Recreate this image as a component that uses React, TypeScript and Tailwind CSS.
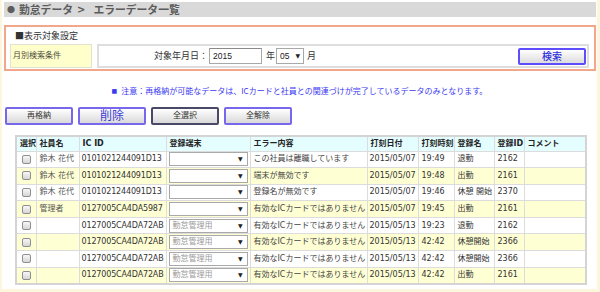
import React from "react";

type Row = {
  name: string;
  ic: string;
  term: string;
  err: string;
  date: string;
  time: string;
  reg: string;
  id: string;
};

const rows: Row[] = [
  { name: "鈴木 花代", ic: "0101021244091D13", term: "", err: "この社員は離職しています", date: "2015/05/07", time: "19:49", reg: "退勤", id: "2162" },
  { name: "鈴木 花代", ic: "0101021244091D13", term: "", err: "端末が無効です", date: "2015/05/07", time: "19:48", reg: "出勤", id: "2161" },
  { name: "鈴木 花代", ic: "0101021244091D13", term: "", err: "登録名が無効です", date: "2015/05/07", time: "19:46", reg: "休憩 開始", id: "2370" },
  { name: "管理者", ic: "0127005CA4DA5987", term: "", err: "有効なICカードではありません", date: "2015/05/07", time: "19:45", reg: "出勤", id: "2161" },
  { name: "", ic: "0127005CA4DA72AB", term: "勤怠管理用", err: "有効なICカードではありません", date: "2015/05/13", time: "19:23", reg: "退勤", id: "2162" },
  { name: "", ic: "0127005CA4DA72AB", term: "勤怠管理用", err: "有効なICカードではありません", date: "2015/05/13", time: "42:42", reg: "休憩開始", id: "2366" },
  { name: "", ic: "0127005CA4DA72AB", term: "勤怠管理用", err: "有効なICカードではありません", date: "2015/05/13", time: "42:42", reg: "休憩開始", id: "2366" },
  { name: "", ic: "0127005CA4DA72AB", term: "勤怠管理用", err: "有効なICカードではありません", date: "2015/05/13", time: "42:42", reg: "出勤", id: "2161" },
];

const headers = ["選択", "社員名", "IC ID", "登録端末", "エラー内容", "打刻日付", "打刻時刻", "登録名", "登録ID", "コメント"];
const widths = [20, 43, 87, 84, 117, 51, 36, 40, 30, 62];

function Checkbox() {
  return (
    <div className="mx-auto w-[9px] h-[9px] rounded-[2px] border border-[#8f8f8f] bg-linear-to-b from-[#f7f7f7] to-[#d6d6d6]" />
  );
}

function RowSelect({ text }: { text: string }) {
  return (
    <div className="mx-[2px] h-[14px] bg-white border border-[#a9a9a9] flex items-center justify-between pl-[3px] pr-[4px]">
      <span className="text-[8px] text-[#9a9a9a] leading-none">{text}</span>
      <span className="text-[6px] text-[#222] leading-none">▼</span>
    </div>
  );
}

function Btn({ label, big, dark }: { label: string; big?: boolean; dark?: boolean }) {
  return (
    <div
      className={
        "w-[68px] h-[18px] rounded-[2px] border-2 bg-linear-to-b from-white to-[#d9d9d9] flex items-center justify-center leading-none " +
        (dark ? "border-[#4a4868] " : "border-[#7767ea] ") +
        (big ? "text-[12px] text-[#3b3bd0]" : "text-[8px] text-[#333]")
      }
    >
      {label}
    </div>
  );
}

export default function App() {
  return (
    <div className="w-[600px] h-[292px] bg-[#fdf6dc] overflow-hidden font-['DejaVu_Sans','Noto_Sans_CJK_JP',sans-serif]">
      <div className="ml-[2px] w-[595px] h-[289px] bg-white flex flex-col">
        {/* title bar */}
        <div className="mt-[2px] ml-[2px] w-[592px] h-[15px] bg-[#d9d9d9] flex items-center font-['Noto_Sans_CJK_JP',sans-serif] font-bold text-[#5c5c5c] leading-none">
          <span className="ml-[3px] text-[8px] font-normal">●</span>
          <span className="ml-[4px] text-[10.8px]">勤怠データ</span>
          <span className="ml-[4px] text-[10px] font-['DejaVu_Sans',sans-serif]">&gt;</span>
          <span className="ml-[8px] text-[10.8px]">エラーデータ一覧</span>
        </div>

        {/* settings box */}
        <div className="mt-[8px] ml-[2px] w-[592px] h-[46px] border-2 border-[#f2a68c] flex flex-col">
          <div className="h-[17px] flex items-center pl-[9px]">
            <span className="text-[9px] text-[#333] leading-none font-['Noto_Sans_CJK_JP',sans-serif]">■表示対象設定</span>
          </div>
          <div className="h-[24px] flex pl-[4px] gap-[5px]">
            <div className="w-[82px] h-full bg-[#ffffcc] border border-[#e2e2cf] flex items-center pl-[2px]">
              <span className="text-[8px] text-[#4a4a3a] leading-none">月別検索条件</span>
            </div>
            <div className="w-[492px] h-full border-2 border-[#dedede] flex items-center">
              <span className="ml-[55px] text-[9px] text-[#333] leading-none">対象年月日：</span>
              <div className="ml-[1px] w-[53px] h-[16px] border border-[#a8a8a8] border-t-[#8a8a8a] flex items-center pl-[3px]">
                <span className="font-['Liberation_Sans',sans-serif] text-[8.5px] text-[#222] leading-none">2015</span>
              </div>
              <span className="ml-[4px] text-[9px] text-[#333] leading-none">年</span>
              <div className="ml-[1px] w-[28px] h-[16px] border border-[#a8a8a8] flex items-center justify-between pl-[3px] pr-[3px]">
                <span className="font-['Liberation_Sans',sans-serif] text-[8.5px] text-[#222] leading-none">05</span>
                <span className="text-[6px] text-[#222] leading-none">▼</span>
              </div>
              <span className="ml-[3px] text-[9px] text-[#333] leading-none">月</span>
              <div className="ml-auto mr-[1px] w-[68px] h-[17px] rounded-[2px] border-2 border-[#5d4dff] bg-linear-to-b from-white to-[#dcdcdc] flex items-center justify-center">
                <span className="text-[10px] text-[#2f2fe0] leading-none font-medium font-['Noto_Sans_CJK_JP',sans-serif]">検索</span>
              </div>
            </div>
          </div>
        </div>

        {/* note */}
        <div className="mt-[15px] h-[10px] flex items-center justify-center">
          <span className="text-[6px] text-[#3a3af0] leading-none mr-[4px]">■</span>
          <span className="text-[8px] text-[#3a3af0] leading-none font-['Noto_Sans_CJK_JP',sans-serif]">
            注意：再格納が可能なデータは、ICカードと社員との関連づけが完了しているデータのみとなります。
          </span>
        </div>

        {/* buttons */}
        <div className="mt-[11px] ml-[3px] flex gap-[5px]">
          <Btn label="再格納" />
          <Btn label="削除" big />
          <Btn label="全選択" dark />
          <Btn label="全解除" />
        </div>

        {/* table */}
        <div className="mt-[10px] ml-[13px]">
          <table className="table-fixed border-collapse border-2 border-[#d4d4d4] w-[570px] text-[8px] leading-none text-[#333]">
            <colgroup>
              {widths.map((w, i) => (
                <col key={i} style={{ width: w }} />
              ))}
            </colgroup>
            <thead>
              <tr className="h-[15px] bg-[#e4fdff]">
                {headers.map((h) => (
                  <th key={h} className="border border-[#dcdcdc] text-left font-bold pl-[3px] pr-0 text-[#222] whitespace-nowrap overflow-hidden">
                    {h}
                  </th>
                ))}
              </tr>
            </thead>
            <tbody>
              {rows.map((r, i) => (
                <tr key={i} className={"h-[16.6px] " + (i % 2 === 1 ? "bg-[#ffffd4]" : "bg-white")}>
                  <td className="border border-[#dcdcdc] p-0">
                    <Checkbox />
                  </td>
                  <td className="border border-[#dcdcdc] pl-[3px] whitespace-nowrap overflow-hidden text-[#555]">{r.name}</td>
                  <td className="border border-[#dcdcdc] pl-[2px] whitespace-nowrap overflow-hidden tracking-[-0.15px]">{r.ic}</td>
                  <td className="border border-[#dcdcdc] p-0">
                    <RowSelect text={r.term} />
                  </td>
                  <td className="border border-[#dcdcdc] pl-[3px] whitespace-nowrap overflow-hidden text-[#444]">{r.err}</td>
                  <td className="border border-[#dcdcdc] pl-[2px] whitespace-nowrap overflow-hidden">{r.date}</td>
                  <td className="border border-[#dcdcdc] pl-[3px] whitespace-nowrap overflow-hidden">{r.time}</td>
                  <td className="border border-[#dcdcdc] pl-[3px] whitespace-nowrap overflow-hidden">{r.reg}</td>
                  <td className="border border-[#dcdcdc] pl-[3px] whitespace-nowrap overflow-hidden">{r.id}</td>
                  <td className="border border-[#dcdcdc] pl-[3px]"></td>
                </tr>
              ))}
            </tbody>
          </table>
        </div>
      </div>
    </div>
  );
}
